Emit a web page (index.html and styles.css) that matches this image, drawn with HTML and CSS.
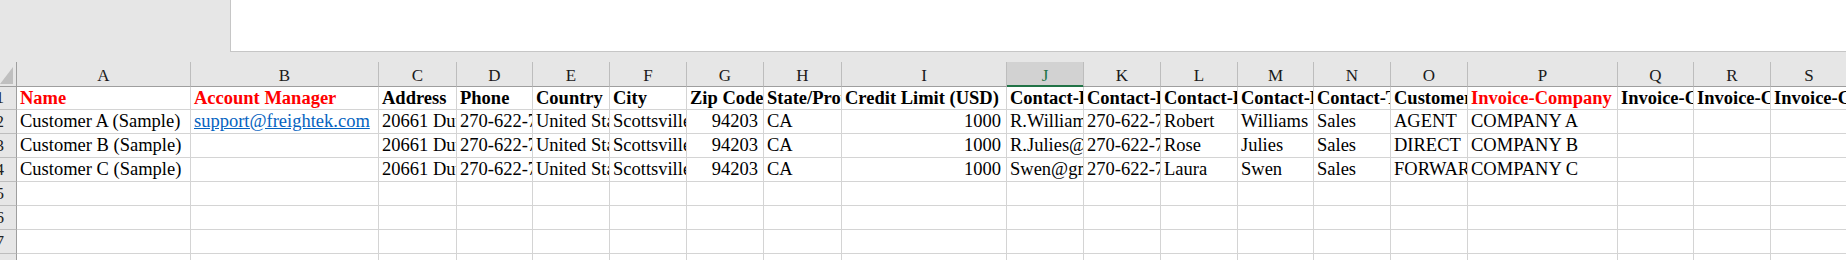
FILE: index.html
```html
<!DOCTYPE html>
<html>
<head>
<meta charset="utf-8">
<link rel="stylesheet" href="styles.css">
</head>
<body>
<div class="topbar"><div class="formula"></div></div>
<div class="sheet">
  <div class="row hdr">
    <div class="corner"><svg width="14" height="18" viewBox="0 0 14 18"><polygon points="13,1 13,18 0,18" fill="#bfbfbf"/></svg></div>
    <div class="h">A</div><div class="h">B</div><div class="h">C</div><div class="h">D</div><div class="h">E</div><div class="h">F</div><div class="h">G</div><div class="h">H</div><div class="h">I</div><div class="h sel">J</div><div class="h">K</div><div class="h">L</div><div class="h">M</div><div class="h">N</div><div class="h">O</div><div class="h">P</div><div class="h">Q</div><div class="h">R</div><div class="h">S</div>
  </div>
  <div class="row r1">
    <div class="rh"><span>1</span></div>
    <div class="c red">Name</div><div class="c red">Account Manager</div><div class="c">Address</div><div class="c">Phone</div><div class="c">Country</div><div class="c">City</div><div class="c">Zip Code</div><div class="c">State/Province</div><div class="c">Credit Limit (USD)</div><div class="c">Contact-Email</div><div class="c">Contact-Phone</div><div class="c">Contact-First Name</div><div class="c">Contact-Last Name</div><div class="c">Contact-Title</div><div class="c">Customer Type</div><div class="c red">Invoice-Company</div><div class="c">Invoice-Contact</div><div class="c">Invoice-Country</div><div class="c">Invoice-City</div>
  </div>
  <div class="row r">
    <div class="rh"><span>2</span></div>
    <div class="c">Customer A (Sample)</div><div class="c"><span class="link">support@freightek.com</span></div><div class="c">20661 Dutchman Rd</div><div class="c">270-622-7000</div><div class="c">United States</div><div class="c">Scottsville</div><div class="c n">94203</div><div class="c">CA</div><div class="c n">1000</div><div class="c">R.Williams@gmail.com</div><div class="c">270-622-7000</div><div class="c">Robert</div><div class="c">Williams</div><div class="c">Sales</div><div class="c">AGENT</div><div class="c">COMPANY A</div><div class="c"></div><div class="c"></div><div class="c"></div>
  </div>
  <div class="row r">
    <div class="rh"><span>3</span></div>
    <div class="c">Customer B (Sample)</div><div class="c"></div><div class="c">20661 Dutchman Rd</div><div class="c">270-622-7000</div><div class="c">United States</div><div class="c">Scottsville</div><div class="c n">94203</div><div class="c">CA</div><div class="c n">1000</div><div class="c">R.Julies@gmail.com</div><div class="c">270-622-7000</div><div class="c">Rose</div><div class="c">Julies</div><div class="c">Sales</div><div class="c">DIRECT</div><div class="c">COMPANY B</div><div class="c"></div><div class="c"></div><div class="c"></div>
  </div>
  <div class="row r">
    <div class="rh"><span>4</span></div>
    <div class="c">Customer C (Sample)</div><div class="c"></div><div class="c">20661 Dutchman Rd</div><div class="c">270-622-7000</div><div class="c">United States</div><div class="c">Scottsville</div><div class="c n">94203</div><div class="c">CA</div><div class="c n">1000</div><div class="c">Swen@gmail.com</div><div class="c">270-622-7000</div><div class="c">Laura</div><div class="c">Swen</div><div class="c">Sales</div><div class="c">FORWARDER</div><div class="c">COMPANY C</div><div class="c"></div><div class="c"></div><div class="c"></div>
  </div>
  <div class="row r">
    <div class="rh"><span>5</span></div>
    <div class="c"></div><div class="c"></div><div class="c"></div><div class="c"></div><div class="c"></div><div class="c"></div><div class="c"></div><div class="c"></div><div class="c"></div><div class="c"></div><div class="c"></div><div class="c"></div><div class="c"></div><div class="c"></div><div class="c"></div><div class="c"></div><div class="c"></div><div class="c"></div><div class="c"></div>
  </div>
  <div class="row r">
    <div class="rh"><span>6</span></div>
    <div class="c"></div><div class="c"></div><div class="c"></div><div class="c"></div><div class="c"></div><div class="c"></div><div class="c"></div><div class="c"></div><div class="c"></div><div class="c"></div><div class="c"></div><div class="c"></div><div class="c"></div><div class="c"></div><div class="c"></div><div class="c"></div><div class="c"></div><div class="c"></div><div class="c"></div>
  </div>
  <div class="row r">
    <div class="rh"><span>7</span></div>
    <div class="c"></div><div class="c"></div><div class="c"></div><div class="c"></div><div class="c"></div><div class="c"></div><div class="c"></div><div class="c"></div><div class="c"></div><div class="c"></div><div class="c"></div><div class="c"></div><div class="c"></div><div class="c"></div><div class="c"></div><div class="c"></div><div class="c"></div><div class="c"></div><div class="c"></div>
  </div>
  <div class="row r">
    <div class="rh"><span>8</span></div>
    <div class="c"></div><div class="c"></div><div class="c"></div><div class="c"></div><div class="c"></div><div class="c"></div><div class="c"></div><div class="c"></div><div class="c"></div><div class="c"></div><div class="c"></div><div class="c"></div><div class="c"></div><div class="c"></div><div class="c"></div><div class="c"></div><div class="c"></div><div class="c"></div><div class="c"></div>
  </div>
</div>
</body>
</html>
```
FILE: styles.css
```css
* { box-sizing: border-box; }
html, body {
  margin: 0;
  padding: 0;
}
body {
  width: 1846px;
  height: 260px;
  overflow: hidden;
  background: #ffffff;
  font-family: "Liberation Serif", "Times New Roman", serif;
  color: #000000;
}
.topbar {
  height: 62px;
  background: #e6e6e6;
  display: flex;
}
.formula {
  margin-left: 230px;
  flex: 1;
  height: 52px;
  background: #ffffff;
  border-left: 1px solid #c6c6c6;
  border-bottom: 1px solid #c6c6c6;
}
.sheet {
  width: 1846px;
  overflow: hidden;
}
.row {
  display: grid;
  grid-template-columns: 17px 174px 188px 78px 76px 77px 77px 77px 78px 165px 77px 77px 77px 76px 77px 77px 150px 76px 77px 77px;
  width: 1848px;
}
.hdr { height: 25px; background: #e6e6e6; }
.r1 { height: 23px; }
.r { height: 24px; }

.corner {
  border-right: 1px solid #9e9e9e;
  border-bottom: 1px solid #9e9e9e;
  display: flex;
  align-items: flex-end;
  padding-bottom: 2px;
}
.h {
  border-right: 1px solid #bdbdbd;
  border-bottom: 1px solid #9e9e9e;
  font-size: 17px;
  line-height: 19px;
  text-align: center;
  display: flex;
  align-items: flex-end;
  justify-content: center;
  padding-bottom: 1px;
  color: #1a1a1a;
}
.h.sel {
  background: #d2d2d2;
  color: #217346;
  border-bottom-color: #217346;
  box-shadow: inset 0 -1px 0 #217346;
}
.rh {
  background: #e6e6e6;
  border-right: 1px solid #9e9e9e;
  border-bottom: 1px solid #bdbdbd;
  display: flex;
  justify-content: flex-end;
  align-items: flex-end;
  padding-right: 12px;
  padding-bottom: 2px;
  font-size: 17px;
  line-height: 19px;
  color: #222222;
  overflow: hidden;
}
.c {
  border-right: 1px solid #d4d4d4;
  border-bottom: 1px solid #d4d4d4;
  font-size: 18.5px;
  line-height: 20px;
  white-space: nowrap;
  overflow: hidden;
  padding: 0 3px 2px 3px;
  display: flex;
  align-items: flex-end;
}
.r1 .c {
  font-weight: bold;
  padding-bottom: 1px;
}
.c.red { color: #ff0000; }
.c.n {
  justify-content: flex-end;
  padding-right: 5px;
}
.link {
  color: #0563c1;
  text-decoration: underline;
}
```
